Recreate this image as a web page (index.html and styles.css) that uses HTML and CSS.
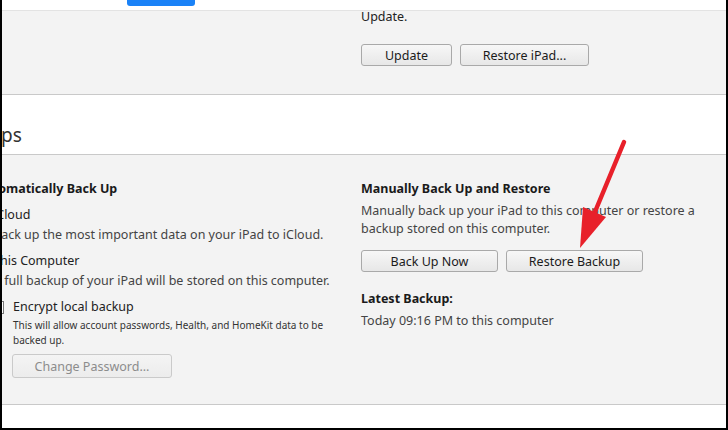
FILE: index.html
```html
<!DOCTYPE html>
<html lang="en">
<head>
  <meta charset="UTF-8">
  <title>Backups</title>
  <link rel="stylesheet" href="styles.css">
</head>
<body>

  <div class="window">
    <div class="tabbar"><span class="tab-active"></span></div>

    <section class="panel panel-update">
      <div class="col-left"></div>
      <div class="col-right">
        <p class="note">Update.</p>
        <div class="btn-row">
          <button class="btn btn-update">Update</button>
          <button class="btn btn-restore-ipad">Restore iPad...</button>
        </div>
      </div>
    </section>

    <div class="section-head">
      <h2>Backups</h2>
    </div>

    <section class="panel panel-backups">
      <div class="col-left">
        <h3>Automatically Back Up</h3>

        <div class="choice">
          <label class="option">
            <span class="radio"></span>
            <span>iCloud</span>
          </label>
          <p class="desc">Back up the most important data on your iPad to iCloud.</p>

          <label class="option">
            <span class="radio radio-on"></span>
            <span>This Computer</span>
          </label>
          <p class="desc">A full backup of your iPad will be stored on this computer.</p>

          <div class="sub">
            <label class="option option-check">
              <span class="checkbox"></span>
              <span>Encrypt local backup</span>
            </label>
            <p class="small">This will allow account passwords, Health, and HomeKit data to be backed up.</p>
            <button class="btn btn-password" disabled>Change Password...</button>
          </div>
        </div>
      </div>

      <div class="col-right">
        <h3>Manually Back Up and Restore</h3>
        <p class="desc desc-wrap">Manually back up your iPad to this computer or restore a backup stored on this computer.</p>
        <div class="btn-row btn-row-manual">
          <button class="btn btn-backup">Back Up Now</button>
          <button class="btn btn-restore">Restore Backup</button>
        </div>
        <h3 class="latest">Latest Backup:</h3>
        <p class="desc">Today 09:16 PM to this computer</p>
      </div>
    </section>

    <div class="footer"></div>

    <!-- annotation arrow drawn over the screenshot -->
    <svg class="arrow" width="728" height="430" viewBox="0 0 728 430">
      <line x1="624" y1="142" x2="592" y2="219" stroke="#e8202a" stroke-width="4.5" stroke-linecap="round"/>
      <polygon points="580,248 583,207 606,217" fill="#e8202a"/>
    </svg>
  </div>

</body>
</html>
```

FILE: styles.css
```css
* {
  box-sizing: border-box;
}

body {
  margin: 0;
  padding: 0;
  font-family: "Noto Sans", "Open Sans", sans-serif;
  font-size: 12.5px;
  color: #333;
  background: #fff;
}

.window {
  position: relative;
  width: 728px;
  height: 430px;
  overflow: hidden;
  border-left: 2px solid #000;
  border-right: 2px solid #000;
  border-bottom: 2px solid #000;
  background: #fff;
}

.tabbar {
  height: 11px;
  border-bottom: 1px solid #e3e3e3;
}

.tab-active {
  display: block;
  width: 68px;
  height: 6px;
  margin-left: 125px;
  background: #1a82f7;
  border-radius: 0 0 3px 3px;
}

.panel {
  display: grid;
  grid-template-columns: 385px 1fr;
  margin-left: -26px;
  background: #f3f3f3;
  border-bottom: 1px solid #c9c9c9;
}

.panel-update {
  height: 84px;
}

.panel-backups {
  height: 250px;
  padding-top: 25px;
}

.section-head {
  height: 60px;
  border-bottom: 1px solid #c9c9c9;
  padding-top: 29px;
}

.section-head h2 {
  margin: 0 0 0 -55px;
  font-size: 19px;
  font-weight: normal;
  line-height: 22px;
  color: #333;
}

p {
  margin: 0;
}

.note {
  margin-top: -1px;
  line-height: 14px;
  color: #222;
}

h3 {
  margin: 0;
  font-size: 12.5px;
  line-height: 18px;
  font-weight: bold;
  color: #1a1a1a;
}

.choice {
  padding-left: 17px;
}

.option {
  display: flex;
  align-items: center;
  margin-top: 8px;
  line-height: 18px;
  color: #222;
}

.radio {
  flex: none;
  width: 13px;
  height: 13px;
  margin-left: -20px;
  margin-right: 7px;
  border: 1px solid #888;
  border-radius: 50%;
  background: #fff;
}

.radio-on {
  background: radial-gradient(circle, #333 3px, #fff 4px);
}

.desc {
  margin-top: 2px;
  line-height: 18px;
  color: #444;
}

.sub {
  padding-left: 20px;
}

.option-check .checkbox {
  flex: none;
  width: 13px;
  height: 13px;
  margin-left: -22px;
  margin-right: 9px;
  border: 1px solid #777;
  background: #fff;
}

.small {
  margin-top: 2px;
  font-size: 10px;
  line-height: 15px;
  color: #333;
  width: 330px;
}

.btn {
  height: 22px;
  padding: 0;
  font-family: inherit;
  font-size: 12.5px;
  color: #1b1b1b;
  border: 1px solid #a9a9a9;
  border-radius: 3px;
  background: linear-gradient(#f7f7f7, #e7e7e7);
}

.btn-row {
  display: flex;
  gap: 8px;
}

.panel-update .btn-row {
  margin-top: 20px;
}

.btn-update {
  width: 91px;
}

.btn-restore-ipad {
  width: 129px;
}

.btn-password {
  width: 160px;
  height: 24px;
  margin-top: 6px;
  margin-left: -1px;
  color: #8c8c8c;
  border-color: #cacaca;
  background: linear-gradient(#f4f4f4, #ececec);
}

.desc-wrap {
  width: 345px;
  margin-top: 4px;
}

.btn-row-manual {
  margin-top: 12px;
}

.btn-backup {
  width: 137px;
}

.btn-restore {
  width: 137px;
}

.latest {
  margin-top: 18px;
}

.latest + .desc {
  margin-top: 4px;
}

.footer {
  height: 23px;
}

.arrow {
  position: absolute;
  left: -2px;
  top: 0;
  pointer-events: none;
}
```
